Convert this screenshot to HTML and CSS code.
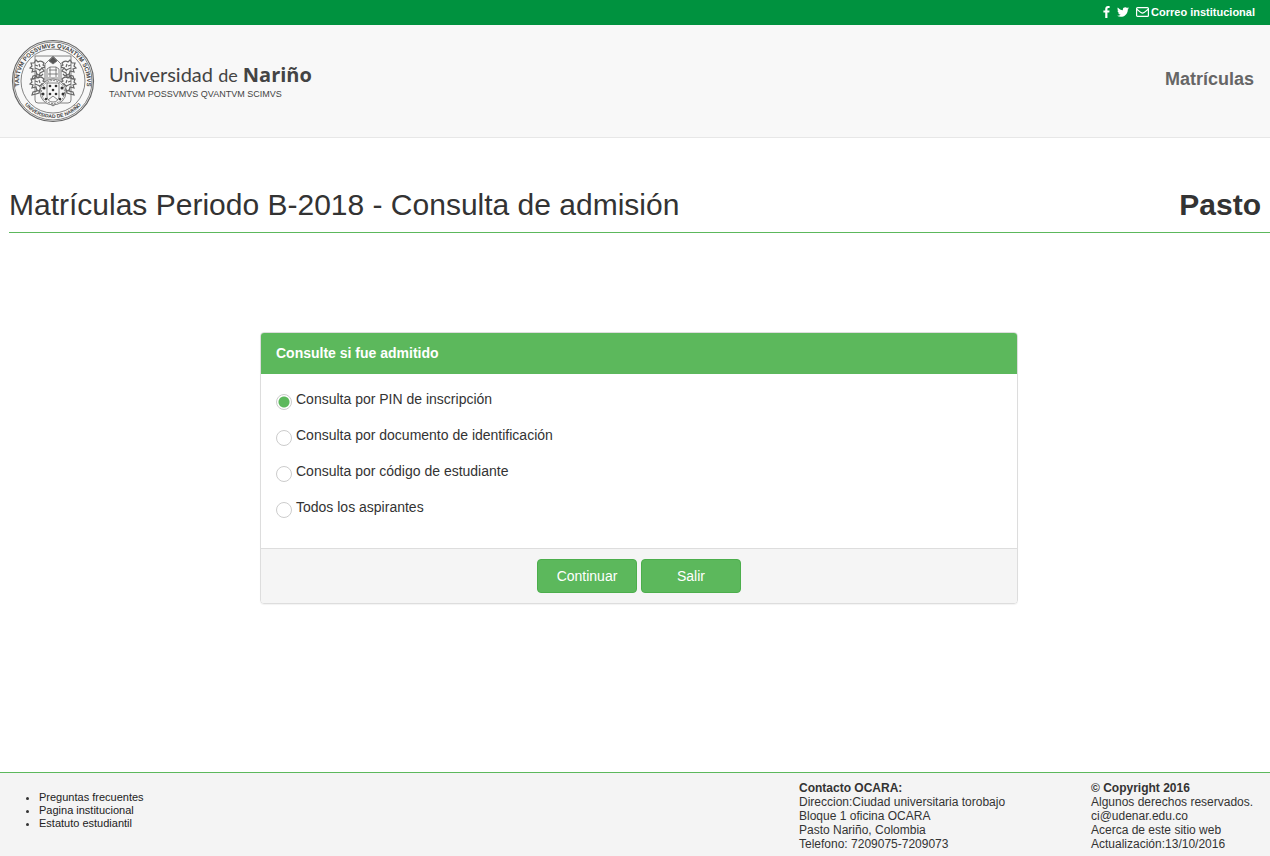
FILE: index.html
```html
<!DOCTYPE html>
<html lang="es">
<head>
  <meta charset="UTF-8">
  <title>Matrículas - Universidad de Nariño</title>
  <meta name="viewport" content="width=device-width, initial-scale=1.0">
  <link rel="stylesheet" href="styles.css">
</head>
<body>

  <nav class="topbar">
    <a href="#" aria-label="Facebook"><svg class="icon-fb" viewBox="479 0 864 1664"><path d="M1343 12v264h-157q-86 0-116 36t-30 108v189h293l-39 296h-254v759h-306v-759h-255v-296h255v-218q0-186 104-288.500t277-102.500q147 0 228 12z"/></svg></a>
    <a href="#" aria-label="Twitter"><svg class="icon-tw" viewBox="108 256 1576 1280"><path d="M1684 408q-67 98-162 167 1 14 1 42 0 130-38 259.500t-115.500 248.500-184.500 210.500-258 146-323 54.500q-271 0-496-145 35 4 78 4 225 0 401-138-105-2-188-64.500t-114-159.500q33 5 61 5 43 0 85-11-112-23-185.500-111.500t-73.500-205.500v-4q68 38 146 41-66-44-105-115t-39-154q0-88 44-163 121 149 294.500 238.500t371.500 99.500q-8-38-8-74 0-134 94.500-228.500t228.500-94.500q140 0 236 102 109-21 205-78-37 115-142 178 93-10 186-50z"/></svg></a>
    <a href="#"><svg class="icon-mail" viewBox="0 0 13 10"><rect x=".6" y=".6" width="11.800" height="8.800" rx="1"/><path d="M.8 2.200 5 5.600q1.500 1.100 3 0l4.200-3.400"/></svg>Correo institucional</a>
  </nav>

  <header class="header">
    <a class="brand" href="#">
      <svg class="crest" viewBox="0 0 84 84">
        <defs>
          <path id="arc-top" d="M10.500 55.500A34 34 0 1 1 73.500 55.500"/>
          <path id="arc-bottom" d="M10 60.500A37 37 0 0 0 74 60.500"/>
          <g id="lion">
            <path d="M14 4q-3-3-6-1L6 1 4 4 1 4l1 3-2 2 3 1-1 3 4-1 1 4-4 1-1 3 4-1 3-1 1-4 4-2-2-3 4-1-3-2z"/>
            <path d="M5 6l3 1M9 5l1 3M5 9l5 2M9 12l3-3M7 15l4 2 2-2"/>
          </g>
        </defs>
        <circle cx="42" cy="42" r="40.500" stroke-width="1.200"/>
        <circle cx="42" cy="42" r="39"/>
        <circle cx="42" cy="42" r="32"/>
        <text class="ring"><textPath href="#arc-top" startOffset="50%" text-anchor="middle">TANTVM POSSVMVS QVANTVM SCIMVS</textPath></text>
        <text class="ring small"><textPath href="#arc-bottom" startOffset="50%" text-anchor="middle">UNIVERSIDAD DE NARIÑO</textPath></text>
        <path d="M24 17h36v44q0 3-3 3H46l-4 3-4-3H27q-3 0-3-3z"/>
        <g stroke-width="1.200">
          <use href="#lion" x="19" y="20"/>
          <use href="#lion" x="19" y="36"/>
          <use href="#lion" transform="translate(65 20) scale(-1 1)"/>
          <use href="#lion" transform="translate(65 36) scale(-1 1)"/>
        </g>
        <path class="fill" d="M34 25l8-8 8 8v18H34z"/>
        <path d="M38 22l4-4 4 4-4 3z" fill="#555"/>
        <path d="M36 42V30l3-2h6l3 2v12M38 31h8M37 35h10M37 39h10M39 28v10M45 28v10"/>
        <circle class="fill" cx="42" cy="53" r="13"/>
        <circle cx="42" cy="53" r="11.500" stroke-dasharray="2 1"/>
        <path class="fill" d="M36 44h12v14q-1 5-6 5t-6-5zM37 61l5-4 5 4"/>
        <g class="dots">
          <circle cx="39" cy="47" r="1.300"/><circle cx="45" cy="47" r="1.300"/>
          <circle cx="42" cy="51" r="1.300"/><circle cx="39" cy="55" r="1.300"/>
          <circle cx="45" cy="55" r="1.300"/><circle cx="33" cy="49" r="1.500"/>
          <circle cx="51" cy="49" r="1.500"/><circle cx="32" cy="55" r="1.500"/>
          <circle cx="52" cy="55" r="1.500"/><circle cx="35" cy="60" r="1.200"/>
          <circle cx="49" cy="60" r="1.200"/>
        </g>
      </svg>
      <span class="brand-text">
        <span class="brand-name">Universidad <small>de</small> <b>Nariño</b></span>
        <span class="brand-motto">TANTVM POSSVMVS QVANTVM SCIMVS</span>
      </span>
    </a>
    <a class="section-link" href="#">Matrículas</a>
  </header>

  <div class="page-title">
    <h1>Matrículas Periodo B-2018 - Consulta de admisión</h1>
    <strong>Pasto</strong>
  </div>

  <main>
    <form class="panel">
      <h2 class="panel-heading">Consulte si fue admitido</h2>
      <div class="panel-body">
        <label><input type="radio" name="consulta" value="pin" checked>Consulta por PIN de inscripción</label>
        <label><input type="radio" name="consulta" value="documento">Consulta por documento de identificación</label>
        <label><input type="radio" name="consulta" value="codigo">Consulta por código de estudiante</label>
        <label><input type="radio" name="consulta" value="todos">Todos los aspirantes</label>
      </div>
      <div class="panel-footer">
        <button type="button">Continuar</button>
        <button type="button">Salir</button>
      </div>
    </form>
  </main>

  <footer class="footer">
    <ul class="footer-links">
      <li><a href="#">Preguntas frecuentes</a></li>
      <li><a href="#">Pagina institucional</a></li>
      <li><a href="#">Estatuto estudiantil</a></li>
    </ul>
    <address class="contact">
      <b>Contacto OCARA:</b><br>
      Direccion:Ciudad universitaria torobajo<br>
      Bloque 1 oficina OCARA<br>
      Pasto Nariño, Colombia<br>
      Telefono: 7209075-7209073
    </address>
    <div class="copyright">
      <b>© Copyright 2016</b><br>
      Algunos derechos reservados.<br>
      ci@udenar.edu.co<br>
      Acerca de este sitio web<br>
      Actualización:13/10/2016
    </div>
  </footer>

</body>
</html>
```
FILE: styles.css
```css
* {
  margin: 0;
  padding: 0;
  box-sizing: border-box;
}

body {
  min-height: 100vh;
  display: flex;
  flex-direction: column;
  font-family: "Liberation Sans", Arial, sans-serif;
  font-size: 14px;
  line-height: 20px;
  color: #333;
  background: #fff;
}

a {
  color: inherit;
  text-decoration: none;
}

.topbar {
  display: flex;
  justify-content: flex-end;
  align-items: center;
  gap: 7px;
  height: 25px;
  padding: 0 15px 2px;
  background: #00923f;
  color: #fff;
  font-size: 11px;
  font-weight: bold;
}

.topbar a {
  display: flex;
  align-items: center;
  gap: 2px;
}

.topbar svg {
  fill: #fff;
}

.icon-fb {
  width: 7px;
  height: 12px;
}

.icon-tw {
  width: 12px;
  height: 10px;
}

.topbar .icon-mail {
  width: 13px;
  height: 10px;
  fill: none;
  stroke: #fff;
  stroke-width: 1.2;
}

.header {
  display: flex;
  justify-content: space-between;
  align-items: center;
  height: 113px;
  padding: 0 16px 0 11px;
  background: #f8f8f8;
  border-bottom: 1px solid #e7e7e7;
}

.brand {
  display: flex;
  align-items: center;
  gap: 14px;
  color: #444;
}

.crest {
  width: 84px;
  height: 84px;
  fill: none;
  stroke: #666;
  stroke-width: 0.8;
}

.crest .fill {
  fill: #f8f8f8;
}

.crest .dots {
  fill: #333;
  stroke: none;
}

.ring {
  fill: #444;
  stroke: none;
  font-size: 6px;
  font-weight: bold;
}

.ring.small {
  font-size: 5px;
}

.brand-text {
  display: flex;
  flex-direction: column;
}

.brand-name {
  font-family: Lato, sans-serif;
  font-size: 20px;
  line-height: 24px;
}

.brand-name small {
  font-size: 18px;
}

.brand-name b {
  font-family: "Open Sans", sans-serif;
}

.brand-motto {
  font-size: 9px;
  line-height: 14px;
}

.section-link {
  padding-bottom: 5px;
  font-size: 18px;
  font-weight: bold;
  color: #666;
}

.page-title {
  display: flex;
  justify-content: space-between;
  align-items: baseline;
  margin: 48px 0 0 9px;
  padding: 0 9px 9px 0;
  border-bottom: 1px solid #5cb85c;
  font-size: 30px;
  line-height: 37px;
}

.page-title h1 {
  font-size: 30px;
  font-weight: normal;
}

main {
  flex: 1;
  padding: 99px 252px 40px 260px;
}

.panel {
  border: 1px solid #ddd;
  border-radius: 4px;
  box-shadow: 0 1px 1px rgba(0, 0, 0, 0.05);
  overflow: hidden;
}

.panel-heading {
  padding: 10px 15px 11px;
  background: #5cb85c;
  color: #fff;
  font-size: 14px;
}

.panel-body {
  display: flex;
  flex-direction: column;
  gap: 15px;
  padding: 15px 15px 30px;
}

.panel-body label {
  display: flex;
  align-items: flex-start;
  gap: 4px;
}

.panel-body input {
  appearance: none;
  width: 16px;
  height: 16px;
  margin-top: 5px;
  border: 1px solid #ccc;
  border-radius: 50%;
  background: #fff;
}

.panel-body input:checked {
  background: radial-gradient(circle, #5cb85c 5px, #fff 6px);
}

.panel-footer {
  display: flex;
  justify-content: center;
  gap: 4px;
  padding: 10px 15px;
  background: #f5f5f5;
  border-top: 1px solid #ddd;
}

button {
  width: 100px;
  height: 34px;
  border: 1px solid #4cae4c;
  border-radius: 4px;
  background: #5cb85c;
  color: #fff;
  font-family: inherit;
  font-size: 14px;
  cursor: pointer;
}

.footer {
  display: grid;
  grid-template-columns: 1fr 292px 164px;
  padding: 8px 15px 5px 39px;
  background: #f4f4f4;
  border-top: 1px solid #5cb85c;
  font-size: 12px;
  line-height: 14px;
}

.footer-links {
  padding-top: 10px;
  font-size: 11px;
  line-height: 13px;
}

.footer-links a {
  color: #222;
}

.contact {
  font-style: normal;
}
```
